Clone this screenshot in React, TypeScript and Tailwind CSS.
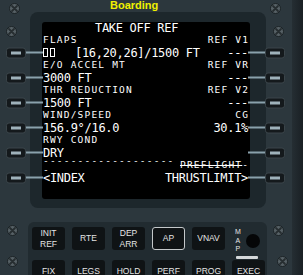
import React from 'react'

const mono = "font-['DejaVu_Sans_Mono',monospace]"

function Screw({ className }: { className: string }) {
  return (
    <svg className={`absolute ${className}`} width="11" height="11" viewBox="0 0 11 11">
      <circle cx="5.5" cy="5.5" r="5" fill="#566065" stroke="#1b2225" strokeWidth="1" />
      <path d="M3 3 L8 8 M8 3 L3 8" stroke="#262d30" strokeWidth="1.8" strokeLinecap="round" />
    </svg>
  )
}

function Lsk({ side }: { side: 'left' | 'right' }) {
  const btn = (
    <div className="w-[20px] h-[11px] rounded-[3px] bg-[#14191c] border border-[#3b454a] flex items-center justify-center shrink-0">
      <div className="w-[10px] h-[3px] bg-[#9fb2bb]" />
    </div>
  )
  const line = <div className="w-[17px] h-[2px] bg-[#8aa1ac] shrink-0" />
  return side === 'left' ? (
    <div className="absolute right-full top-1/2 -translate-y-1/2 flex items-center">
      {btn}
      {line}
    </div>
  ) : (
    <div className="absolute left-full top-1/2 -translate-y-1/2 flex items-center">
      {line}
      {btn}
    </div>
  )
}

function Label({ left, right }: { left?: React.ReactNode; right?: string }) {
  return (
    <div className="h-[12px] flex items-center justify-between text-[9.5px] tracking-[1.2px] leading-none text-white">
      <span>{left}</span>
      <span className="-mr-[1.2px]">{right}</span>
    </div>
  )
}

function Value({ left, right }: { left?: React.ReactNode; right?: string }) {
  return (
    <div className="relative h-[13px] flex items-center justify-between text-[12px] tracking-[-0.3px] leading-none text-white">
      <Lsk side="left" />
      <span className="flex items-center">{left}</span>
      <span>{right}</span>
      <Lsk side="right" />
    </div>
  )
}

function Key({ top, bottom, outlined }: { top: string; bottom?: string; outlined?: boolean }) {
  return (
    <div
      className={`w-[33px] h-[23px] rounded-[3px] bg-[#0f1315] flex flex-col items-center justify-center text-[8.5px] leading-[11px] text-[#e4e4e4] font-['Liberation_Sans',Arial,sans-serif] ${
        outlined ? 'border-[1.5px] border-[#c4c8ca]' : ''
      }`}
    >
      <span>{top}</span>
      {bottom && <span>{bottom}</span>}
    </div>
  )
}

export default function App() {
  return (
    <div className="relative w-[303px] h-[275px] overflow-hidden bg-[#2c373d] flex">
      <div className="w-[292px] shrink-0">
        {/* status */}
        <div className="h-[12px] pt-[1px] pl-[110px] text-[11px] leading-[9px] font-bold text-[#f0f000] font-['Liberation_Sans',Arial,sans-serif]">
          Boarding
        </div>

        {/* bezel + screen */}
        <div className="ml-[30px] w-[236px] rounded-[8px] bg-[#1d272c] pt-[10px] pb-[9px] pl-[12px]">
          <div className={`w-[208px] h-[177px] bg-black rounded-[3px] pl-[1px] pr-[2px] ${mono}`}>
            <div className="h-[12px] flex items-center pl-[52px] text-[12px] tracking-[-0.3px] leading-none text-white">
              TAKE OFF REF
            </div>

            <Label left="FLAPS" right="REF V1" />
            <Value
              left={
                <>
                  <span className="w-[5px] h-[9px] border border-white" />
                  <span className="ml-[2px] w-[5px] h-[9px] border border-white" />
                  <span className="ml-[20px]">[16,20,26]/1500 FT</span>
                </>
              }
              right="---"
            />

            <Label left="E/O ACCEL MT" right="REF VR" />
            <Value left="3000 FT" right="---" />

            <Label left="THR REDUCTION" right="REF V2" />
            <Value left="1500 FT" right="---" />

            <Label left="WIND/SPEED" right="CG" />
            <Value left="156.9°/16.0" right="30.1%" />

            <Label left="RWY COND" />
            <Value left="DRY" />

            <div className="h-[12px] flex items-center justify-between text-[9.5px] tracking-[1.2px] leading-none text-white">
              <span>--------------------</span>
              <span className="-mr-[1.2px]">
                <span className="line-through">PREFLIGHT</span>-
              </span>
            </div>
            <Value left="<INDEX" right="THRUSTLIMIT>" />
          </div>
        </div>

        {/* keys */}
        <div className="mt-[14px] ml-[28px] w-[239px] h-[60px] rounded-tl-[6px] rounded-tr-[6px] bg-[#212b30] pt-[5px] pl-[4px]">
          <div className="flex gap-[7px]">
            <Key top="INIT" bottom="REF" />
            <Key top="RTE" />
            <Key top="DEP" bottom="ARR" />
            <Key top="AP" outlined />
            <Key top="VNAV" />
            <div className="w-[33px] h-[23px]">
              <div className="flex items-center gap-[5px] pl-[3px] pt-[1px]">
                <div className="flex flex-col items-center text-[7px] leading-[8.5px] text-[#e4e4e4] font-['Liberation_Sans',Arial,sans-serif]">
                  <span>M</span>
                  <span>A</span>
                  <span>P</span>
                </div>
                <div className="w-[14px] h-[14px] rounded-full bg-[#050607]" />
              </div>
              <div className="mt-[2px] ml-[4px] w-[22px] h-[3px] rounded-[1px] bg-[#d4d8da]" />
            </div>
          </div>
          <div className="flex gap-[7px] mt-[10px]">
            <Key top="FIX" />
            <Key top="LEGS" />
            <Key top="HOLD" />
            <Key top="PERF" />
            <Key top="PROG" />
            <Key top="EXEC" />
          </div>
        </div>
      </div>
      <div className="flex-1 bg-gradient-to-r from-[#252e33] to-[#1a2024]" />

      <Screw className="left-[9px] top-[3px]" />
      <Screw className="left-[6px] top-[26px]" />
      <Screw className="left-[270px] top-[3px]" />
      <Screw className="left-[273px] top-[26px]" />
      <Screw className="left-[7px] top-[225px]" />
      <Screw className="left-[7px] top-[256px]" />
      <Screw className="left-[273px] top-[225px]" />
      <Screw className="left-[277px] top-[256px]" />
    </div>
  )
}
